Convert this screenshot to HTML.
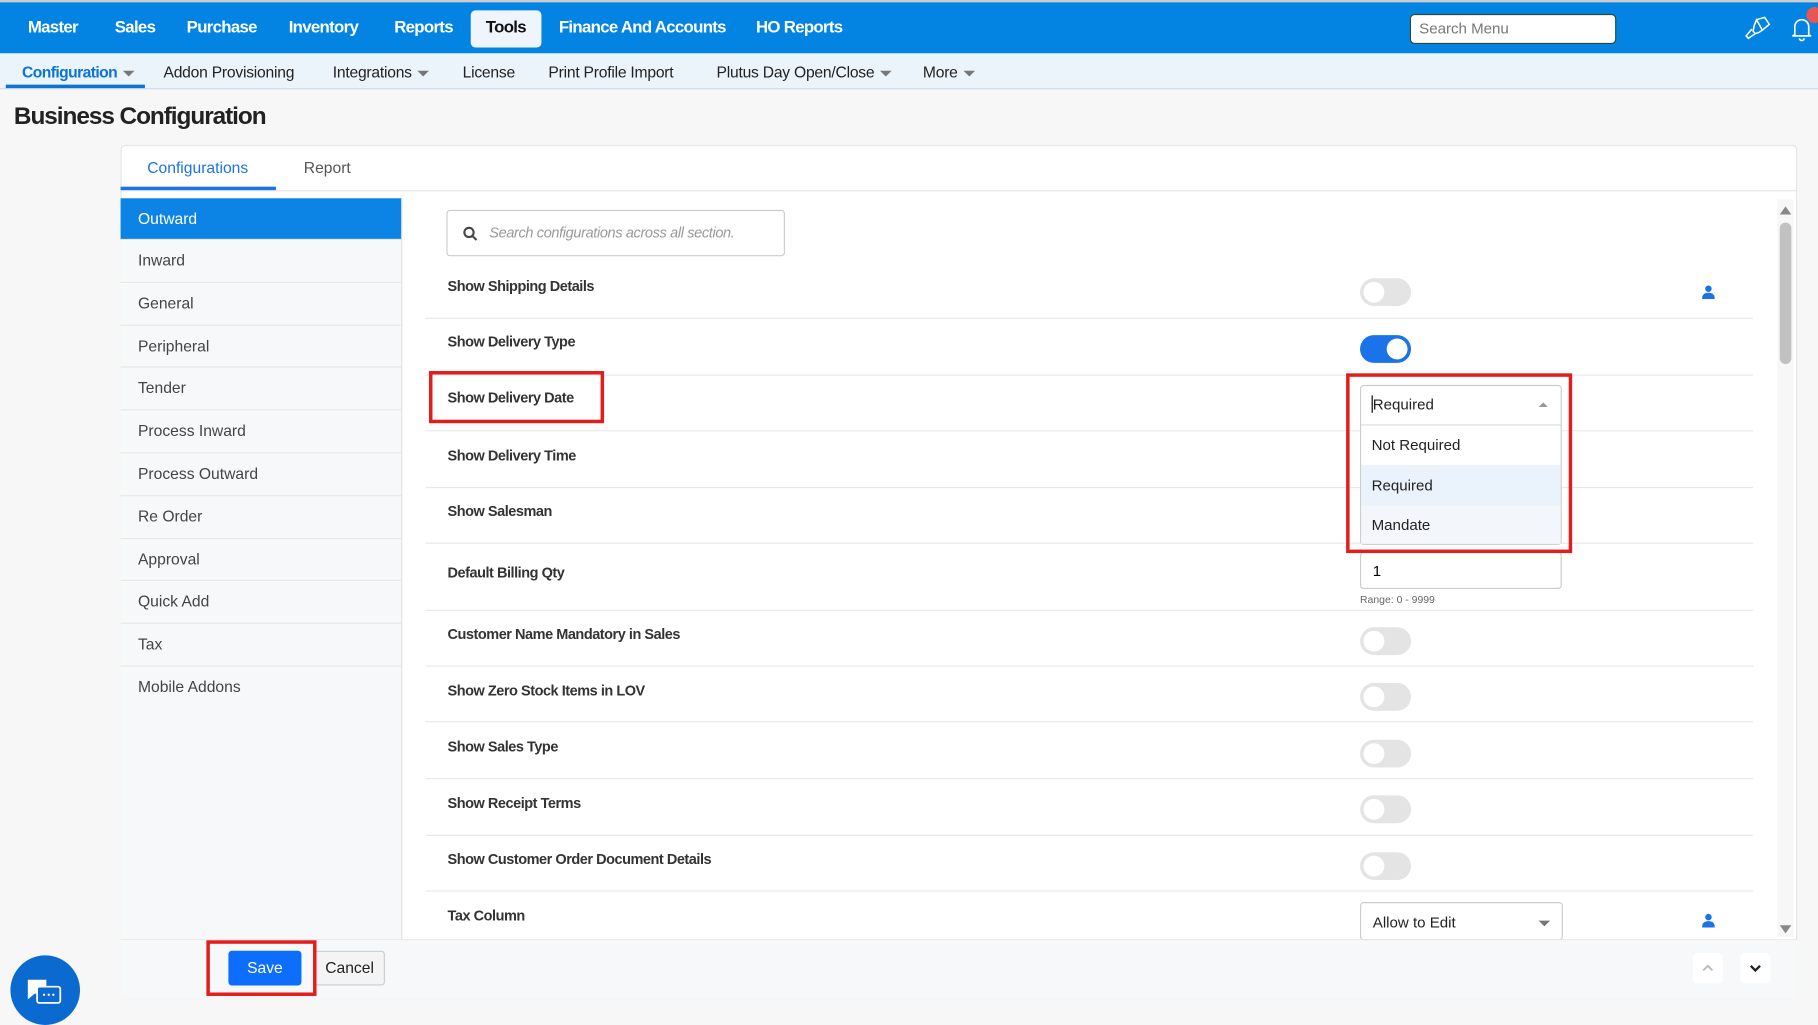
<!DOCTYPE html>
<html><head><meta charset="utf-8"><style>
*{box-sizing:border-box;margin:0;padding:0}
html,body{width:1818px;height:1007px;overflow:hidden;background:#f7f7f7;font-family:"Liberation Sans",sans-serif}
#w{position:absolute;left:0;top:0;width:1568px;height:869px;transform:scale(1.15944);transform-origin:0 0;background:#f7f7f7}
.a{position:absolute}
.top{left:0;top:2px;width:1568px;height:44px;background:#0484e2}
.top span{position:absolute;top:14px;color:#fff;font-weight:bold;font-size:14.5px;letter-spacing:-0.6px}
.sub{left:0;top:46px;width:1568px;height:31px;background:#ebf3fb;border-bottom:1px solid #cfdbe8}
.sub span{position:absolute;top:9px;font-size:13.5px;color:#222;letter-spacing:-0.2px}
.car{display:inline-block;width:0;height:0;border-left:5px solid transparent;border-right:5px solid transparent;border-top:5px solid #777;margin-left:5px;vertical-align:middle}
.panel{left:104px;top:125px;width:1446px;height:736px;background:#fff;border:1px solid #e6e6e6;border-radius:4px}
.side{left:104px;top:171px;width:243px;height:640px;background:#f7f8fa;border-right:1px solid #e3e3e3}
.side div{height:36.8px;line-height:36px;padding-left:15px;font-size:13.5px;color:#444;border-bottom:1px solid #e6e6e6}
.lbl{position:absolute;left:386px;font-size:12.5px;font-weight:bold;color:#333;letter-spacing:-0.4px}
.ln{position:absolute;left:367px;width:1145px;height:1px;background:#e8e8e8}
.tg{position:absolute;left:1173px;width:44px;height:24px;border-radius:12px;background:#e4e4e4}
.tg:after{content:"";position:absolute;left:3px;top:3px;width:18px;height:18px;border-radius:50%;background:#fff}
.tg.on{background:#1a73e8}.tg.on:after{left:23px}
.red{position:absolute;border:3px solid #e31c1c}
.dd{position:absolute;font-size:13px;color:#222}
</style></head><body><div id="w">
<div class="a" style="left:0;top:0;width:1568px;height:2px;background:#ccc"></div>
<div class="a top">
<span style="left:24px">Master</span><span style="left:99px">Sales</span><span style="left:161px">Purchase</span><span style="left:249px">Inventory</span><span style="left:340px">Reports</span>
<div class="a" style="left:406px;top:7px;width:61px;height:32px;background:#eef5fc;border-radius:4px"></div>
<span style="left:419px;color:#111">Tools</span><span style="left:482px">Finance And Accounts</span><span style="left:652px">HO Reports</span>
<div class="a" style="left:1216px;top:10px;width:178px;height:26px;background:#fff;border:1px solid #2a4a3a;border-radius:4px;font-size:13px;color:#777;padding:4px 7px">Search Menu</div>
<svg class="a" style="left:1504px;top:12px" width="24" height="22" viewBox="0 0 24 22" fill="none" stroke="#fff" stroke-width="1.3"><path d="M11 3l7-2 4 6-6 5-5-9zM11 3l5 9-3 2-3 1-2-2 1-5zM7 11l-5 6 2 2 6-4"/></svg>
<svg class="a" style="left:1544px;top:12px" width="20" height="22" viewBox="0 0 20 22" fill="none" stroke="#fff" stroke-width="1.4"><path d="M4 16V9a6 6 0 0112 0v7l2 1H2zM8 19a2 2 0 004 0"/></svg>
<div class="a" style="left:1558px;top:4px;width:14px;height:14px;border-radius:50%;background:#e85555"></div>
</div>
<div class="a sub">
<span style="left:19px;color:#0b73d5;font-weight:bold;letter-spacing:-0.5px">Configuration<i class="car"></i></span>
<div class="a" style="left:5px;top:27px;width:120px;height:3px;background:#0b73d5"></div>
<span style="left:141px">Addon Provisioning</span><span style="left:287px">Integrations<i class="car"></i></span><span style="left:399px">License</span><span style="left:473px">Print Profile Import</span><span style="left:618px">Plutus Day Open/Close<i class="car"></i></span><span style="left:796px">More<i class="car"></i></span>
</div>
<div class="a" style="left:12px;top:89px;font-size:21px;font-weight:bold;color:#222;letter-spacing:-0.9px">Business Configuration</div>
<div class="a panel"></div>
<div class="a" style="left:104px;top:164px;width:1446px;height:1px;background:#e6e6e6"></div>
<div class="a" style="left:127px;top:137px;font-size:13.5px;color:#1a73e8">Configurations</div>
<div class="a" style="left:104px;top:161px;width:134px;height:3px;background:#1a73e8"></div>
<div class="a" style="left:262px;top:137px;font-size:13.5px;color:#555">Report</div>
<div class="a side">
<div style="background:#0b84e6;color:#fff;height:36px">Outward</div><div>Inward</div><div>General</div><div>Peripheral</div><div>Tender</div><div>Process Inward</div><div>Process Outward</div><div>Re Order</div><div>Approval</div><div>Quick Add</div><div>Tax</div><div style="border:none">Mobile Addons</div>
</div>
<div class="a" style="left:385px;top:181px;width:292px;height:40px;border:1px solid #ccc;border-radius:3px;font-size:12.5px;color:#999;font-style:italic;padding:12px 0 0 36px;letter-spacing:-0.3px">Search configurations across all section.
<svg class="a" style="left:13px;top:13px" width="13" height="13" viewBox="0 0 13 13" fill="none" stroke="#444" stroke-width="1.8"><circle cx="5.5" cy="5.5" r="4"/><path d="M8.5 8.5l3.5 3.5"/></svg></div>
<div class="lbl" style="top:240px">Show Shipping Details</div><div class="tg" style="top:240px"></div><div class="ln" style="top:274px"></div>
<div class="lbl" style="top:288px">Show Delivery Type</div><div class="tg on" style="top:289px"></div><div class="ln" style="top:323px"></div>
<div class="lbl" style="top:336px">Show Delivery Date</div><div class="red" style="left:370px;top:320px;width:151px;height:45px"></div><div class="ln" style="top:371px"></div>
<div class="lbl" style="top:386px">Show Delivery Time</div><div class="ln" style="top:420px"></div>
<div class="lbl" style="top:434px">Show Salesman</div><div class="ln" style="top:468px"></div>
<div class="lbl" style="top:487px">Default Billing Qty</div>
<div class="a" style="left:1173px;top:476px;width:174px;height:32px;border:1px solid #ccc;border-radius:3px;font-size:13px;padding:8px 10px">1</div>
<div class="a" style="left:1173px;top:512px;font-size:9px;color:#666">Range: 0 - 9999</div><div class="ln" style="top:526px"></div>
<div class="lbl" style="top:540px">Customer Name Mandatory in Sales</div><div class="tg" style="top:541px"></div><div class="ln" style="top:574px"></div>
<div class="lbl" style="top:589px">Show Zero Stock Items in LOV</div><div class="tg" style="top:589px"></div><div class="ln" style="top:622px"></div>
<div class="lbl" style="top:637px">Show Sales Type</div><div class="tg" style="top:638px"></div><div class="ln" style="top:671px"></div>
<div class="lbl" style="top:686px">Show Receipt Terms</div><div class="tg" style="top:686px"></div><div class="ln" style="top:720px"></div>
<div class="lbl" style="top:734px">Show Customer Order Document Details</div><div class="tg" style="top:735px"></div><div class="ln" style="top:768px"></div>
<div class="lbl" style="top:783px">Tax Column</div>
<div class="a" style="left:1173px;top:778px;width:175px;height:33px;border:1px solid #ccc;border-radius:3px;font-size:13px;padding:9px 10px;color:#222">Allow to Edit<i class="car" style="position:absolute;right:10px;top:15px;margin:0"></i></div>
<svg class="a" style="left:1468px;top:246px" width="11" height="12" viewBox="0 0 11 12" fill="#1a73e8"><circle cx="5.5" cy="3" r="2.8"/><path d="M0 12c0-4 2-5.5 5.5-5.5S11 8 11 12z"/></svg>
<svg class="a" style="left:1468px;top:788px" width="11" height="12" viewBox="0 0 11 12" fill="#1a73e8"><circle cx="5.5" cy="3" r="2.8"/><path d="M0 12c0-4 2-5.5 5.5-5.5S11 8 11 12z"/></svg>
<div class="a" style="left:1173px;top:332px;width:174px;height:138px;background:#fff;border:1px solid #ccc;border-radius:3px"></div>
<div class="a" style="left:1174px;top:366px;width:172px;height:1px;background:#ddd"></div>
<div class="a" style="left:1174px;top:401px;width:172px;height:35px;background:#eaf3fc"></div>
<div class="a" style="left:1174px;top:436px;width:172px;height:33px;background:#f3f7fb"></div>
<div class="dd" style="left:1183px;top:341px;border-left:1px solid #000">Required</div>
<div class="a" style="left:1327px;top:347px;border-left:4px solid transparent;border-right:4px solid transparent;border-bottom:4px solid #999"></div>
<div class="dd" style="left:1183px;top:376px">Not Required</div>
<div class="dd" style="left:1183px;top:411px">Required</div>
<div class="dd" style="left:1183px;top:445px">Mandate</div>
<div class="red" style="left:1161px;top:322px;width:195px;height:155px"></div>
<div class="a" style="left:1533px;top:172px;width:14px;height:636px;background:#f7f7f7"></div>
<div class="a" style="left:1535px;top:192px;width:10px;height:122px;background:#c1c1c1;border-radius:5px"></div>
<div class="a" style="left:1535px;top:178px;border-left:5px solid transparent;border-right:5px solid transparent;border-bottom:7px solid #888"></div>
<div class="a" style="left:1535px;top:798px;border-left:5px solid transparent;border-right:5px solid transparent;border-top:7px solid #888"></div>
<div class="a" style="left:104px;top:810px;width:1446px;height:51px;background:#f7f8fa;border-top:1px solid #e6e6e6;border-radius:0 0 4px 4px"></div>
<div class="a" style="left:197px;top:820px;width:63px;height:30px;background:#0d6efd;border-radius:3px;color:#fff;font-size:13.5px;text-align:center;line-height:30px">Save</div>
<div class="a" style="left:271px;top:820px;width:61px;height:30px;background:#f4f4f4;border:1px solid #ccc;border-radius:3px;font-size:13.5px;text-align:center;line-height:28px;color:#222">Cancel</div>
<div class="red" style="left:178px;top:811px;width:95px;height:48px"></div>
<div class="a" style="left:1460px;top:822px;width:26px;height:26px;background:#fff;border-radius:4px"><svg style="position:absolute;left:8px;top:10px" width="10" height="6" viewBox="0 0 10 6" fill="none" stroke="#bbb" stroke-width="1.6"><path d="M1 5l4-4 4 4"/></svg></div>
<div class="a" style="left:1501px;top:822px;width:26px;height:26px;background:#fff;border-radius:4px"><svg style="position:absolute;left:8px;top:10px" width="10" height="7" viewBox="0 0 10 7" fill="none" stroke="#222" stroke-width="2"><path d="M1 1l4 4 4-4"/></svg></div>
<div class="a" style="left:9px;top:824px;width:60px;height:60px;border-radius:50%;background:#0b6ad0"></div>
<svg class="a" style="left:22px;top:843px" width="34" height="26" viewBox="0 0 34 26"><path d="M2 2h16v12H8l-6 5z" fill="#fff"/><rect x="10" y="8" width="20" height="14" rx="2" fill="#0b6ad0" stroke="#fff" stroke-width="1.5"/><circle cx="16" cy="15" r="1" fill="#fff"/><circle cx="20" cy="15" r="1" fill="#fff"/><circle cx="24" cy="15" r="1" fill="#fff"/></svg>
</div></body></html>
